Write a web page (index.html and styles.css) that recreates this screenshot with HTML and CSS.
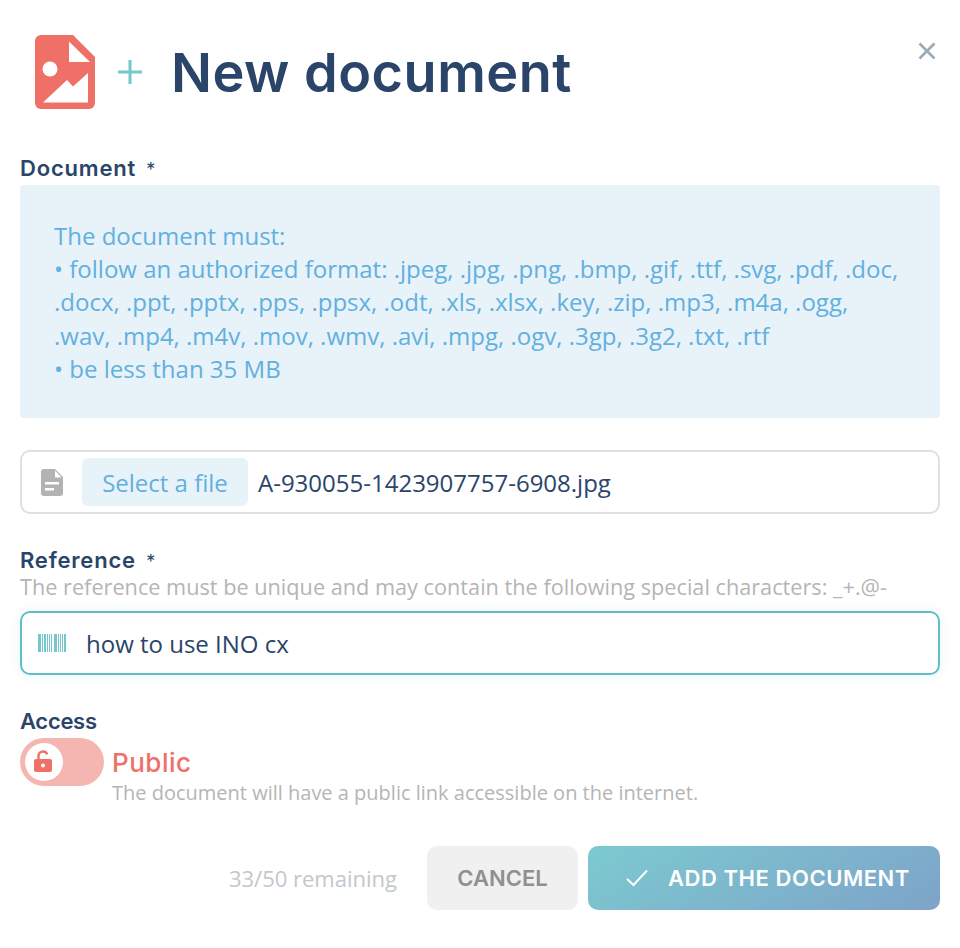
FILE: index.html
```html
<!DOCTYPE html>
<html lang="en">
<head>
  <meta charset="UTF-8" />
  <meta name="viewport" content="width=device-width, initial-scale=1.0" />
  <title>New document</title>
  <link rel="stylesheet" href="styles.css">
</head>
<body>

  <div class="modal">

    <!-- Header -->
    <div class="header">
      <svg class="doc-icon" viewBox="0 0 60 74">
        <path fill="#ef7067" d="M6 0H38L60 22V68a6 6 0 0 1-6 6H6a6 6 0 0 1-6-6V6a6 6 0 0 1 6-6Z"/>
        <path fill="#fff" d="M34 6.500L55 27H34Z"/>
        <circle fill="#fff" cx="15" cy="34" r="7.500"/>
        <path fill="#fff" d="M8 67.500L32 45L38 51.500L53 38V67.500Z"/>
      </svg>
      <svg class="plus-icon" viewBox="0 0 24 24">
        <path d="M12 0V24M0 12H24" stroke="#74c8cc" stroke-width="3" fill="none"/>
      </svg>
      <h1 class="title">New document</h1>
      <svg class="close-icon" viewBox="0 0 18 18">
        <path d="M1.500 1.500L16.500 16.500M16.500 1.500L1.500 16.500" stroke="#9aabb5" stroke-width="2.600" fill="none"/>
      </svg>
    </div>

    <!-- Document -->
    <label class="field-label">Document <span class="star">*</span></label>
    <div class="info-box">
      The document must:<br>
      • follow an authorized format: .jpeg, .jpg, .png, .bmp, .gif, .ttf, .svg, .pdf, .doc, .docx, .ppt, .pptx, .pps, .ppsx, .odt, .xls, .xlsx, .key, .zip, .mp3, .m4a, .ogg, .wav, .mp4, .m4v, .mov, .wmv, .avi, .mpg, .ogv, .3gp, .3g2, .txt, .rtf<br>
      • be less than 35 MB
    </div>

    <div class="file-input">
      <svg class="file-icon" viewBox="0 0 22 27">
        <path fill="#b3b3b3" d="M3 0H14L22 8V24a3 3 0 0 1-3 3H3a3 3 0 0 1-3-3V3a3 3 0 0 1 3-3Z"/>
        <path fill="#fff" d="M14 1.500L20.500 8.500H14ZM4 13H18V15.500H4ZM4 19H13V21.500H4Z"/>
      </svg>
      <button class="file-btn">Select a file</button>
      <span class="file-name">A-930055-1423907757-6908.jpg</span>
    </div>

    <!-- Reference -->
    <label class="field-label ref-label">Reference <span class="star">*</span></label>
    <p class="hint">The reference must be unique and may contain the following special characters: _+.@-</p>
    <div class="text-input">
      <svg class="barcode-icon" viewBox="0 0 28 18">
        <path fill="#74c8cc" d="M0 0H3V18H0ZM4 0H5V18H4ZM6 0H8V18H6ZM9 0H10V18H9ZM11 0H12V18H11ZM13 0H14V18H13ZM16 0H19V18H16ZM20 0H21V18H20ZM22 0H23V18H22ZM24 0H25V18H24ZM26 0H28V18H26Z"/>
      </svg>
      <span class="input-value">how to use INO cx</span>
    </div>

    <!-- Access -->
    <label class="field-label access-label">Access</label>
    <div class="access-row">
      <div class="toggle">
        <div class="knob">
          <svg class="lock-icon" viewBox="0 0 18 22">
            <path fill="none" stroke="#ef7067" stroke-width="2.400" d="M4.500 9V6a4.500 4.500 0 0 1 8.700-1.600"/>
            <path fill="#ef7067" fill-rule="evenodd" d="M2 9H16a2 2 0 0 1 2 2V20a2 2 0 0 1-2 2H2a2 2 0 0 1-2-2V11a2 2 0 0 1 2-2ZM9 13.500a2 2 0 1 0 0 4a2 2 0 1 0 0-4Z"/>
          </svg>
        </div>
      </div>
      <div class="access-text">
        <div class="access-value">Public</div>
        <div class="access-hint">The document will have a public link accessible on the internet.</div>
      </div>
    </div>

    <!-- Footer -->
    <div class="footer">
      <span class="remaining">33/50 remaining</span>
      <button class="btn-cancel">CANCEL</button>
      <button class="btn-add">
        <svg class="check-icon" viewBox="0 0 22 18">
          <path d="M1 10L7.500 16L21 1.500" stroke="#fff" stroke-width="2" fill="none"/>
        </svg>
        ADD THE DOCUMENT
      </button>
    </div>

  </div>

</body>
</html>
```

FILE: styles.css
```css
* {
  margin: 0;
  padding: 0;
  box-sizing: border-box;
}
body {
  background: #fff;
  font-family: 'Open Sans', sans-serif;
  color: #2a4569;
}
.modal {
  width: 960px;
  height: 948px;
  padding: 35px 20px 0;
}
.header {
  display: flex;
  align-items: center;
  height: 74px;
  padding-left: 15px;
  position: relative;
}
.doc-icon {
  width: 60px;
  height: 74px;
}
.plus-icon {
  width: 24px;
  height: 24px;
  margin-left: 23px;
}
.title {
  font-family: 'Inter', sans-serif;
  font-size: 54px;
  font-weight: 600;
  letter-spacing: 0.500px;
  margin-left: 29px;
  color: #2a4569;
}
.close-icon {
  position: absolute;
  top: 7px;
  right: 4px;
  width: 18px;
  height: 18px;
}
.field-label {
  display: block;
  font-family: 'Inter', sans-serif;
  font-size: 22px;
  font-weight: 600;
  letter-spacing: 0.800px;
  line-height: 30px;
  margin-top: 44px;
}
.star {
  font-weight: 400;
  font-size: 18px;
  line-height: 1;
  margin-left: 4px;
}
.info-box {
  height: 233px;
  margin-top: 2px;
  padding: 34px 34px;
  background: #e8f2f9;
  border-radius: 4px;
  color: #62b0e0;
  font-size: 24px;
  line-height: 33.200px;
}
.file-input {
  display: flex;
  align-items: center;
  height: 64px;
  margin-top: 32px;
  padding: 0 6px 0 19px;
  border: 2px solid #e0e0e0;
  border-radius: 10px;
}
.file-icon {
  width: 22px;
  height: 27px;
}
.file-btn {
  width: 166px;
  height: 48px;
  margin-left: 19px;
  border: none;
  border-radius: 6px;
  background: #e8f2f9;
  color: #62b0e0;
  font-family: 'Open Sans', sans-serif;
  font-size: 24px;
}
.file-name {
  margin-left: 10px;
  font-size: 24px;
}
.ref-label {
  margin-top: 31px;
}
.hint {
  color: #b5b5b5;
  font-size: 21.700px;
  line-height: 28px;
  margin-top: -2px;
}
.text-input {
  display: flex;
  align-items: center;
  height: 64px;
  margin-top: 10px;
  padding-left: 16px;
  border: 2px solid #5fbfc4;
  border-radius: 10px;
  box-shadow: 0 0 12px rgba(95, 191, 196, 0.15);
}
.barcode-icon {
  width: 28px;
  height: 18px;
}
.input-value {
  margin-left: 20px;
  font-size: 24px;
}
.access-label {
  margin-top: 31px;
  letter-spacing: -0.300px;
}
.access-row {
  display: flex;
  margin-top: 2px;
}
.toggle {
  display: flex;
  align-items: center;
  width: 84px;
  height: 48px;
  padding-left: 5px;
  border-radius: 24px;
  background: #f5b6b1;
}
.knob {
  display: flex;
  align-items: center;
  justify-content: center;
  width: 38px;
  height: 38px;
  border-radius: 50%;
  background: #fff;
}
.lock-icon {
  width: 18px;
  height: 22px;
  margin: 0 2px 2px 0;
}
.access-text {
  margin-left: 8px;
}
.access-value {
  font-family: 'Inter', sans-serif;
  font-size: 26px;
  font-weight: 500;
  letter-spacing: 0.500px;
  line-height: 49px;
  color: #ef7067;
}
.access-hint {
  color: #b5b5b5;
  font-size: 20px;
  line-height: 28px;
  margin-top: -8px;
}
.footer {
  display: flex;
  align-items: center;
  justify-content: flex-end;
  margin-top: 39px;
}
.remaining {
  color: #c2c8cc;
  font-size: 22px;
  margin-right: 30px;
}
.btn-cancel {
  width: 151px;
  height: 64px;
  border: none;
  border-radius: 10px;
  background: #f0f0f0;
  color: #8f8f8f;
  font-family: 'Inter', sans-serif;
  font-size: 22px;
  font-weight: 600;
}
.btn-add {
  display: flex;
  align-items: center;
  padding-left: 38px;
  width: 352px;
  height: 64px;
  margin-left: 10px;
  border: none;
  border-radius: 10px;
  background: linear-gradient(150deg, #7ccad0 0%, #7ea3c9 100%);
  color: #fff;
  font-family: 'Inter', sans-serif;
  font-size: 22px;
  font-weight: 600;
  letter-spacing: 0.550px;
}
.check-icon {
  width: 22px;
  height: 18px;
  margin-right: 20px;
}
```
